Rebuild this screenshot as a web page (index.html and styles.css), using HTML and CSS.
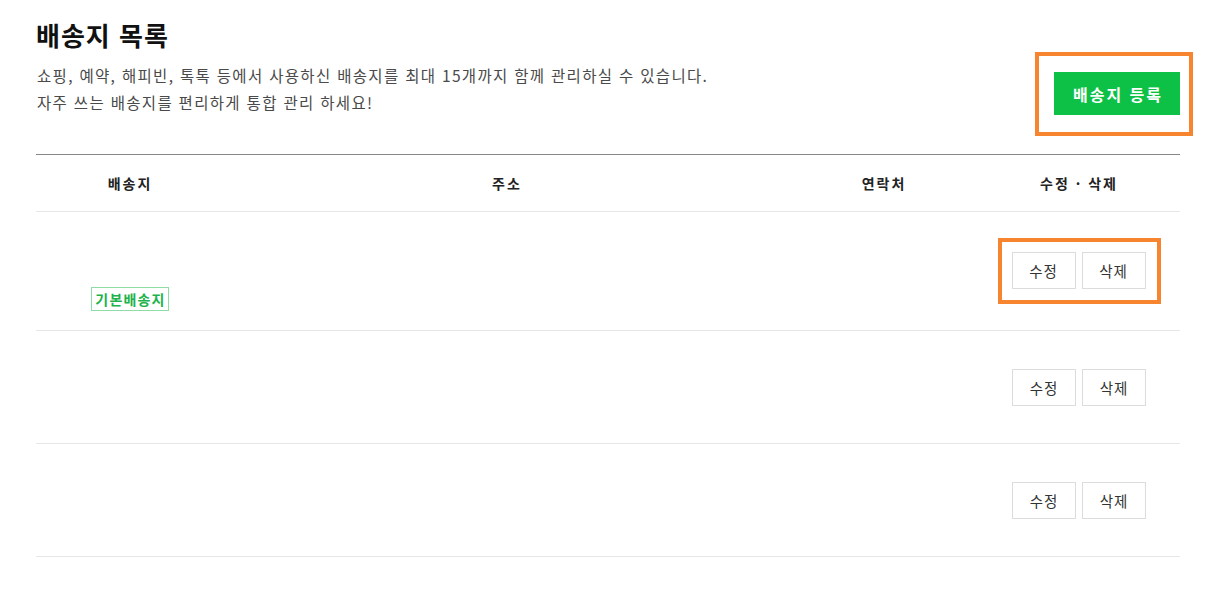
FILE: index.html
```html
<!DOCTYPE html>
<html lang="ko">
<head>
<meta charset="utf-8">
<title>배송지 목록</title>
<link rel="stylesheet" href="styles.css">
</head>
<body>
<div class="page">
  <div class="top">
    <div class="intro">
      <h1 class="title">배송지 목록</h1>
      <p class="desc">쇼핑, 예약, 해피빈, 톡톡 등에서 사용하신 배송지를 최대 15개까지 함께 관리하실 수 있습니다.<br>자주 쓰는 배송지를 편리하게 통합 관리 하세요!</p>
    </div>
    <div class="mark mark-add">
      <button class="btn-add" type="button">배송지 등록</button>
    </div>
  </div>

  <div class="table">
    <div class="row head">
      <div class="cell">배송지</div>
      <div class="cell">주소</div>
      <div class="cell">연락처</div>
      <div class="cell">수정 · 삭제</div>
    </div>
    <div class="row item first">
      <div class="cell cell-name"><span class="badge">기본배송지</span></div>
      <div class="cell"></div>
      <div class="cell"></div>
      <div class="cell">
        <div class="mark mark-actions">
          <div class="actions">
            <button class="btn" type="button">수정</button>
            <button class="btn" type="button">삭제</button>
          </div>
        </div>
      </div>
    </div>
    <div class="row item">
      <div class="cell"></div>
      <div class="cell"></div>
      <div class="cell"></div>
      <div class="cell">
        <div class="actions">
          <button class="btn" type="button">수정</button>
          <button class="btn" type="button">삭제</button>
        </div>
      </div>
    </div>
    <div class="row item">
      <div class="cell"></div>
      <div class="cell"></div>
      <div class="cell"></div>
      <div class="cell">
        <div class="actions">
          <button class="btn" type="button">수정</button>
          <button class="btn" type="button">삭제</button>
        </div>
      </div>
    </div>
  </div>
</div>
</body>
</html>
```

FILE: styles.css
```css
* { box-sizing: border-box; }
html, body { margin: 0; padding: 0; background: #fff; }
body {
  font-family: "Noto Sans CJK KR", "Noto Sans", sans-serif;
  color: #222;
}
.page {
  width: 1231px;
  padding: 18px 51px 0 36px;
}
.top {
  display: flex;
  justify-content: space-between;
  align-items: flex-start;
  margin-bottom: 18px;
}
.title {
  margin: 0;
  font-size: 26px;
  line-height: 34px;
  font-weight: 700;
  color: #111;
  letter-spacing: 1px;
}
.desc {
  margin: 10px 0 0 1px;
  font-size: 15.5px;
  line-height: 27px;
  font-weight: 400;
  color: #4a4a4a;
  letter-spacing: 1.32px;
}
.mark {
  border: 4px solid #f7852f;
}
.mark-add {
  margin-top: 34px;
  margin-right: -13px;
  padding: 16px 9px 17px 15px;
}
.btn-add {
  display: block;
  width: 126px;
  height: 43px;
  border: 0;
  background: #0dc147;
  color: #fff;
  font-family: inherit;
  font-size: 16px;
  font-weight: 700;
  letter-spacing: 2px;
  padding: 0 0 0 2px;
}
.table {
  border-top: 1px solid #888;
}
.row {
  display: grid;
  grid-template-columns: 188px 566px 188px 202px;
  border-bottom: 1px solid #e6e6e6;
}
.cell {
  display: flex;
  align-items: center;
  justify-content: center;
}
.head { height: 57px; }
.head .cell {
  font-size: 14px;
  font-weight: 700;
  color: #222;
  letter-spacing: 2px;
}
.item { height: 113px; }
.item.first { height: 119px; }
.cell-name {
  align-items: flex-end;
  padding-bottom: 19px;
}
.badge {
  display: inline-block;
  border: 1px solid #8fdca6;
  color: #20b24a;
  font-size: 14px;
  font-weight: 700;
  line-height: 22px;
  padding: 0 2px 0 3px;
  letter-spacing: 1.2px;
}
.actions {
  display: flex;
  gap: 6px;
}
.mark-actions {
  padding: 10px 11px 11px 10px;
}
.btn {
  width: 64px;
  height: 37px;
  border: 1px solid #dcdcdc;
  background: #fff;
  color: #333;
  font-family: inherit;
  font-size: 14.5px;
  letter-spacing: 1px;
  padding: 0;
}
```
